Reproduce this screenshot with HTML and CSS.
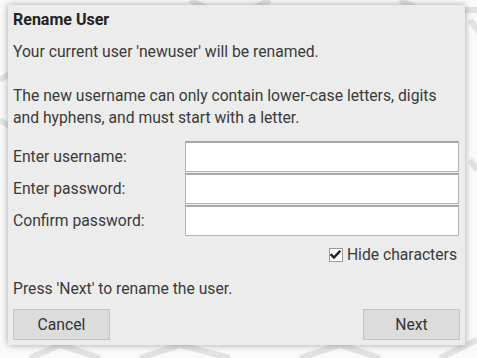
FILE: index.html
```html
<!DOCTYPE html>
<html lang="en">
<head>
  <meta charset="UTF-8">
  <title>Rename User</title>
  <link rel="stylesheet" href="styles.css">
</head>
<body>
  <svg class="backdrop" width="477" height="358" viewBox="0 0 477 358" fill="none" stroke="#e2e2e2" stroke-width="6">
    <polyline points="0,80 30,60 60,80 60,120 30,140 0,120"></polyline>
    <polyline points="190,0 230,20 270,0"></polyline>
    <polyline points="400,0 420,10 520,10"></polyline>
    <polyline points="470,20 500,60"></polyline>
    <polyline points="470,160 477,170"></polyline>
    <polyline points="30,358 60,345 100,358"></polyline>
    <polyline points="140,358 180,345 230,358"></polyline>
    <polyline points="300,358 340,345 380,358"></polyline>
    <polyline points="440,358 477,340"></polyline>
  </svg>

  <div class="dialog">
    <h1 class="dialog-title">Rename User</h1>
    <p class="dialog-text">Your current user 'newuser' will be renamed.</p>
    <p class="dialog-text rules">The new username can only contain lower-case letters, digits and hyphens, and must start with a letter.</p>

    <div class="form">
      <label class="form-label" for="username">Enter username:</label>
      <input class="form-input" id="username" type="text">
      <label class="form-label" for="password">Enter password:</label>
      <input class="form-input" id="password" type="password">
      <label class="form-label" for="confirm">Confirm password:</label>
      <input class="form-input" id="confirm" type="password">
    </div>

    <label class="hide-row">
      <span class="check">
        <svg width="11" height="10" viewBox="0 0 11 10" fill="none" stroke="#222" stroke-width="2.4" stroke-linecap="square">
          <polyline points="1.5,5 4,7.6 9.5,1.6"></polyline>
        </svg>
      </span>
      Hide characters
    </label>

    <p class="dialog-text hint">Press 'Next' to rename the user.</p>

    <div class="buttons">
      <button class="btn">Cancel</button>
      <button class="btn">Next</button>
    </div>
  </div>
</body>
</html>
```

FILE: styles.css
```css
* {
  margin: 0;
  padding: 0;
  box-sizing: border-box;
}

body {
  font-family: Roboto, "Liberation Sans", sans-serif;
  background: #fafafa;
  color: #3a3a3a;
  width: 477px;
  height: 358px;
  overflow: hidden;
  position: relative;
}

.backdrop {
  position: absolute;
  top: 0;
  left: 0;
}

.dialog {
  position: relative;
  width: 457px;
  height: 340px;
  margin: 5px 0 0 8px;
  padding: 4px 5px 0 5px;
  background: #ececec;
  box-shadow: 0 0 7px rgba(0,0,0,0.35);
  display: flex;
  flex-direction: column;
}

.dialog-title {
  font-size: 16px;
  font-weight: bold;
  line-height: 22px;
  color: #222;
}

.dialog-text {
  font-size: 15.7px;
  line-height: 22px;
  margin-top: 10px;
}

.rules {
  margin-top: 22px;
}

.form {
  display: grid;
  grid-template-columns: 172px 274px;
  row-gap: 1px;
  margin-top: 12px;
  align-items: center;
}

.form-label {
  font-size: 15.7px;
}

.form-input {
  height: 31px;
  background: #fff;
  border: 1px solid #b4b4b4;
  border-top: 2px solid #a8a8a8;
  outline: none;
}

.hide-row {
  align-self: flex-end;
  display: flex;
  align-items: center;
  gap: 4px;
  font-size: 15.7px;
  margin-top: 8px;
  margin-right: 3px;
  line-height: 22px;
}

.check {
  width: 14px;
  height: 14px;
  background: #fff;
  border: 1px solid #9a9a9a;
  display: flex;
  align-items: center;
  justify-content: center;
}

.hint {
  margin-top: 12px;
}

.buttons {
  display: flex;
  justify-content: space-between;
  margin-top: 9px;
}

.btn {
  width: 97px;
  height: 31px;
  background: #dcdcdc;
  border: 1px solid #c4c4c4;
  font-family: Roboto, "Liberation Sans", sans-serif;
  font-size: 15.7px;
  color: #333;
}
```
